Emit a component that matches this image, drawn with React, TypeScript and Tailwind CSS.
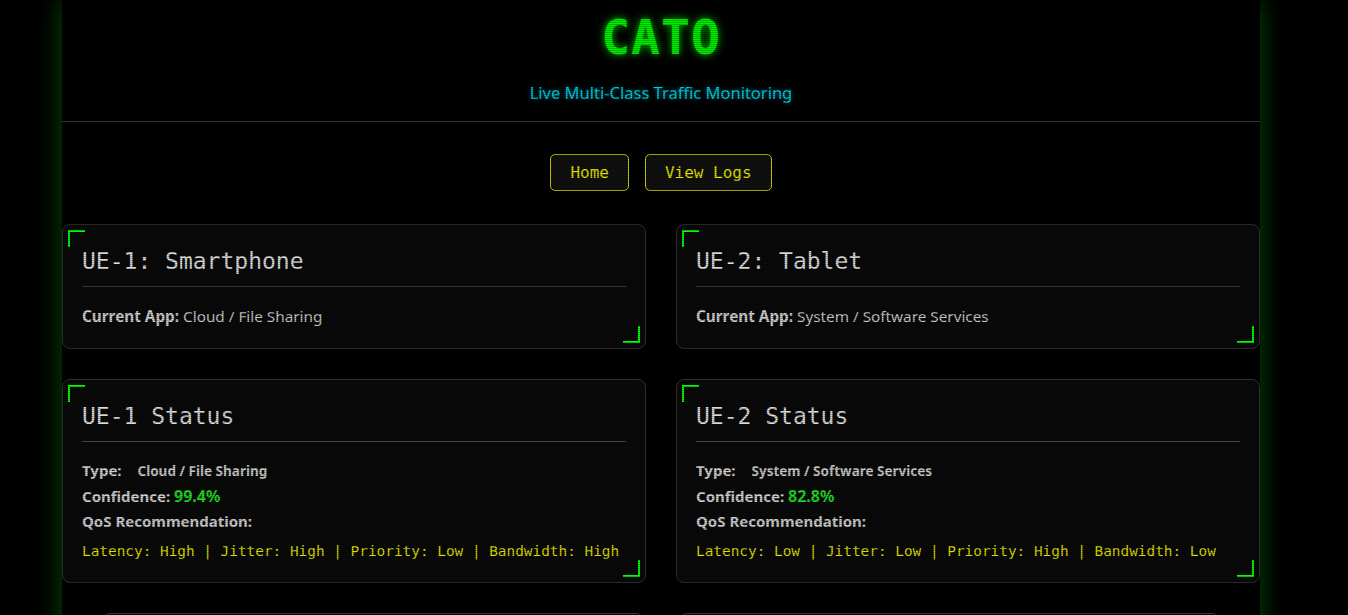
import React from 'react';

const devices = [
  {
    id: 'UE-1',
    device: 'Smartphone',
    app: 'Cloud / File Sharing',
    confidence: '99.4%',
    qos: { Latency: 'High', Jitter: 'High', Priority: 'Low', Bandwidth: 'High' },
  },
  {
    id: 'UE-2',
    device: 'Tablet',
    app: 'System / Software Services',
    confidence: '82.8%',
    qos: { Latency: 'Low', Jitter: 'Low', Priority: 'High', Bandwidth: 'Low' },
  },
];

function Corners() {
  return (
    <>
      <span className="absolute top-[5px] left-[5px] w-[17px] h-[17px] border-t-2 border-l-2 border-[#00ff00]" />
      <span className="absolute bottom-[5px] right-[5px] w-[17px] h-[17px] border-b-2 border-r-2 border-[#00ff00]" />
    </>
  );
}

function Card({ title, children }: { title: string; children: React.ReactNode }) {
  return (
    <div className="relative bg-[#0a0a0a] border border-[#333] rounded-lg px-[19px] pt-[21px] pb-[21px]">
      <Corners />
      <h3 className="font-['DejaVu_Sans_Mono',monospace] text-[23px] leading-[30px] text-[#dcdcdc] pb-[10px] border-b border-[#444]">
        {title}
      </h3>
      {children}
    </div>
  );
}

export default function App() {
  return (
    <div className="min-h-screen bg-black font-['Noto_Sans',sans-serif] relative">
      <div className="ml-[62px] w-[1198px] min-h-[2000px] bg-black shadow-[0_0_24px_rgba(0,255,0,0.35)]">
        {/* Header */}
        <header className="text-center border-b border-[#333] pb-[16px]">
          <h1 className="pt-[11px] font-['DejaVu_Sans_Mono',monospace] font-bold text-[48px] leading-[52px] tracking-[1px] text-[#00ee00] [text-shadow:0_0_8px_rgba(0,255,0,0.8)]">
            CATO
          </h1>
          <p className="mt-[18px] text-[16.5px] leading-[24px] text-[#00cfe0] [text-shadow:0_0_5px_rgba(0,210,230,0.5)]">
            Live Multi-Class Traffic Monitoring
          </p>
        </header>

        {/* Nav */}
        <nav className="flex justify-center gap-4 mt-[32px]">
          {['Home', 'View Logs'].map((b) => (
            <a
              key={b}
              href="#"
              className="block px-[19px] py-[8px] border border-[#d4d400] rounded-[5px] bg-[#111] font-['DejaVu_Sans_Mono',monospace] text-[16px] leading-[19px] text-[#e6e600]"
            >
              {b}
            </a>
          ))}
        </nav>

        {/* Devices */}
        <div className="grid grid-cols-2 gap-[30px] mt-[33px]">
          {devices.map((d) => (
            <Card key={d.id} title={`${d.id}: ${d.device}`}>
              <p className="mt-[19px] mb-[1px] text-[15.3px] leading-[20px] text-[#c8c8c8]">
                <b className="text-[#d0d0d0]">Current App:</b> {d.app}
              </p>
            </Card>
          ))}
          {devices.map((d) => (
            <Card key={d.id + 's'} title={`${d.id} Status`}>
              <div className="mt-[16px] text-[15px] leading-[25px] text-[#d0d0d0] font-bold">
                <p>
                  Type: <span className="pl-3 text-[13.5px] text-[#c8c8c8]">{d.app}</span>
                </p>
                <p>
                  Confidence: <span className="text-[16px] text-[#22dd22]">{d.confidence}</span>
                </p>
                <p>QoS Recommendation:</p>
              </div>
              <p className="mt-[7px] font-['DejaVu_Sans_Mono',monospace] text-[14.4px] leading-[20px] text-[#dede00] whitespace-nowrap">
                {Object.entries(d.qos)
                  .map(([k, v]) => `${k}: ${v}`)
                  .join(' | ')}
              </p>
            </Card>
          ))}
        </div>

        {/* Charts */}
        <div className="grid grid-cols-2 gap-[35px] px-10 mt-[30px]">
          {devices.map((d) => (
            <div key={d.id + 'c'} className="h-[360px] bg-[#0a0a0a] border border-[#333] rounded-lg" />
          ))}
        </div>

        <div className="mx-10 mt-[40px] h-[700px] bg-[#0a0a0a] border border-[#333] rounded-lg" />
      </div>

      {/* scanlines */}
      <div className="pointer-events-none fixed inset-0 bg-[repeating-linear-gradient(0deg,rgba(0,0,0,0.25)_0px,rgba(0,0,0,0.25)_1px,transparent_1px,transparent_2px)]" />
    </div>
  );
}
